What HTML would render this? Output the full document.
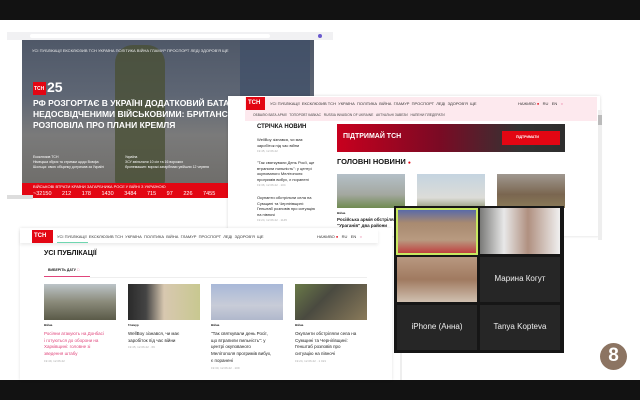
<!DOCTYPE html>
<html><head><meta charset="utf-8"><style>
*{margin:0;padding:0;box-sizing:border-box}
body{width:640px;height:400px;background:#fff;position:relative;overflow:hidden;font-family:"Liberation Sans","DejaVu Sans",sans-serif}
.a{position:absolute}
.t{position:absolute;white-space:nowrap;color:#222}
</style></head><body>
<div class="a" style="left:0;top:0;width:640px;height:20px;background:#121212"></div>
<div class="a" style="left:0;top:380px;width:640px;height:20px;background:#121212"></div>

<!-- window 1 -->
<div class="a" style="left:7px;top:32px;width:326px;height:8px;background:#f1f1f3"></div>
<div class="a" style="left:30px;top:34px;width:240px;height:4px;background:#fff;border-radius:2px"></div>
<div class="a" style="left:318px;top:34px;width:4px;height:4px;border-radius:50%;background:#6a5acd"></div>
<div class="a" style="left:22px;top:40px;width:292px;height:158px;background:linear-gradient(180deg,#4f5868 0%,#5e6674 35%,#7a7a7a 60%,#6c6a66 100%)"></div>
<div class="a" style="left:115px;top:45px;width:50px;height:140px;background:#4a5036;opacity:.8;border-radius:18px 18px 4px 4px"></div>
<div class="a" style="left:240px;top:40px;width:70px;height:60px;background:#3f4e68;opacity:.7"></div>
<div class="t" style="left:32px;top:48px;font-size:4px;color:#eee">УСІ ПУБЛІКАЦІЇ ЕКСКЛЮЗИВ ТСН УКРАЇНА ПОЛІТИКА ВІЙНА ГЛАМУР ПРОСПОРТ ЛЕДІ ЗДОРОВ'Я ЩЕ</div>
<div class="a" style="left:33px;top:82px;width:13px;height:13px;background:#e30613"></div>
<div class="t" style="left:34px;top:86px;font-size:5px;color:#fff;font-weight:bold">ТСН</div>
<div class="t" style="left:47px;top:79px;font-size:14px;color:#fff;font-weight:bold">25</div>
<div class="t" style="left:33px;top:98px;font-size:8.5px;color:#fff;font-weight:bold;line-height:11px">РФ РОЗГОРТАЄ В УКРАЇНІ ДОДАТКОВИЙ БАТАЛЬЙОН З<br>НЕДОСВІДЧЕНИМИ ВІЙСЬКОВИМИ: БРИТАНСЬКА РОЗВІДКА<br>РОЗПОВІЛА ПРО ПЛАНИ КРЕМЛЯ</div>
<div class="t" style="left:33px;top:155px;font-size:3.5px;color:#fff;line-height:5px">Ексклюзив ТСН<br>Німецька зброя та стримки щодо Вовфа<br>Шольца: свою обіцянку дотримав за Україні</div>
<div class="t" style="left:125px;top:155px;font-size:3.5px;color:#fff;line-height:5px">Україна<br>ЗСУ звільнили 10 сіл та 16 ворожих<br>бронемашин: ворожі загарбники увійшли 12 червня</div>
<div class="a" style="left:22px;top:183px;width:292px;height:15px;background:#e30613"></div>
<div class="t" style="left:33px;top:184px;font-size:4px;color:#fff">ВІЙСЬКОВІ ВТРАТИ КРАЇНИ ЗАГАРБНИКА РОСІЇ У ВІЙНІ З УКРАЇНОЮ</div>
<div class="t" style="left:33px;top:191px;font-size:5.5px;color:#fff;word-spacing:9px">~32150 212 178 1430 3484 715 97 226 7455</div>
<div class="a" style="left:7px;top:195px;width:26px;height:4px;background:#ddd"></div>

<!-- window 2 -->
<div class="a" style="left:228px;top:96px;width:372px;height:140px;background:#fff;box-shadow:0 0 3px rgba(0,0,0,.15)"></div>
<div class="a" style="left:246px;top:97px;width:100px;height:24px;background:#fff"></div>
<div class="a" style="left:245px;top:97px;width:352px;height:24px;background:#fde9ee"></div>
<div class="a" style="left:246px;top:97px;width:19px;height:13px;background:#e30613"></div>
<div class="t" style="left:248px;top:100px;font-size:6px;color:#fff;font-weight:bold">ТСН</div>
<div class="t" style="left:270px;top:101px;font-size:4px;color:#333">УСІ ПУБЛІКАЦІЇ &nbsp;ЕКСКЛЮЗИВ ТСН &nbsp;УКРАЇНА &nbsp;ПОЛІТИКА &nbsp;ВІЙНА &nbsp;ГЛАМУР &nbsp;ПРОСПОРТ &nbsp;ЛЕДІ &nbsp;ЗДОРОВ'Я &nbsp;ЩЕ</div>
<div class="t" style="left:518px;top:101px;font-size:4px;color:#333">НАЖИВО <span style="color:#e30613">●</span> &nbsp; RU &nbsp; EN &nbsp; <span style="color:#e0457b">○</span></div>
<div class="t" style="left:253px;top:113px;font-size:3.3px;color:#444">ОБВАЛЮ ВАТА АРМІЇ &nbsp; ТОПОРОВТ КАВКАС &nbsp; RUSSIA INVASION OF UKRAINE &nbsp; АКТУАЛЬНІ ЗАВЕЗИ &nbsp; НАПЕНИ ПЛЕДЕРАТИ</div>
<div class="t" style="left:257px;top:124px;font-size:6px;color:#111;font-weight:bold">СТРІЧКА НОВИН</div>
<div class="t" style="left:257px;top:137px;font-size:4px;line-height:5.5px">WellBoy зізнався, чи має<br>заробіток під час війни<br><span style="color:#aaa;font-size:3px">19:45, 12.06.22</span></div>
<div class="t" style="left:257px;top:160px;font-size:4px;line-height:5.5px">"Так святкували День Росії, ще<br>втрапили пильність": у центрі<br>окупованого Мелітополя<br>прогримів вибух, є поранені<br><span style="color:#aaa;font-size:3px">19:36, 12.06.22 · 104</span></div>
<div class="t" style="left:257px;top:195px;font-size:4px;line-height:5.5px">Окупанти обстріляли села на<br>Сумщині та Чернігівщині:<br>Генштаб розповів про ситуацію<br>на півночі<br><span style="color:#aaa;font-size:3px">19:24, 12.06.22 · 1145</span></div>
<div class="a" style="left:337px;top:124px;width:228px;height:28px;background:linear-gradient(90deg,#c8001e 0%,#7a0a24 45%,#333 80%,#2e2e2e 100%)"></div>
<div class="t" style="left:343px;top:133px;font-size:7px;color:#fff;font-weight:bold">ПІДТРИМАЙ ТСН</div>
<div class="a" style="left:502px;top:131px;width:58px;height:14px;background:#e30613"></div>
<div class="t" style="left:516px;top:135px;font-size:3.5px;color:#fff;font-weight:bold">ПІДТРИМАТИ</div>
<div class="t" style="left:337px;top:157px;font-size:7.5px;color:#111;font-weight:bold">ГОЛОВНІ НОВИНИ <span style="color:#e30613;font-size:5px">●</span></div>
<div class="a" style="left:337px;top:174px;width:68px;height:34px;background:linear-gradient(180deg,#b4c0c8 0%,#a4a8a0 60%,#6f8a50 100%)"></div>
<div class="a" style="left:417px;top:174px;width:68px;height:34px;background:linear-gradient(180deg,#c4d4e0 0%,#dcdcd8 70%,#98a080 100%)"></div>
<div class="a" style="left:497px;top:174px;width:68px;height:34px;background:linear-gradient(180deg,#a09890 0%,#7a6650 60%,#8a7a58 100%)"></div>
<div class="t" style="left:337px;top:211px;font-size:3px;font-weight:bold">Війна</div>
<div class="t" style="left:337px;top:217px;font-size:4.5px;font-weight:bold;line-height:6px">Російська армія обстріляла<br>"Ураганів" два райони</div>
<div class="a" style="left:598px;top:110px;width:4px;height:130px;background:#eee"></div>
<div class="a" style="left:598px;top:115px;width:4px;height:10px;background:#bbb"></div>

<!-- window 3 -->
<div class="a" style="left:20px;top:228px;width:372px;height:152px;background:#fff;box-shadow:0 0 3px rgba(0,0,0,.12)"></div>
<div class="a" style="left:20px;top:229px;width:358px;height:14px;background:#fff;box-shadow:0 2px 3px rgba(0,0,0,.08)"></div>
<div class="a" style="left:32px;top:230px;width:21px;height:13px;background:#e30613"></div>
<div class="t" style="left:34px;top:233px;font-size:6px;color:#fff;font-weight:bold">ТСН</div>
<div class="t" style="left:57px;top:234px;font-size:4px;color:#333">УСІ ПУБЛІКАЦІЇ &nbsp;ЕКСКЛЮЗИВ ТСН &nbsp;УКРАЇНА &nbsp;ПОЛІТИКА &nbsp;ВІЙНА &nbsp;ГЛАМУР &nbsp;ПРОСПОРТ &nbsp;ЛЕДІ &nbsp;ЗДОРОВ'Я &nbsp;ЩЕ</div>
<div class="a" style="left:57px;top:242px;width:31px;height:1px;background:#6fd6b0"></div>
<div class="t" style="left:317px;top:234px;font-size:4px;color:#333">НАЖИВО <span style="color:#e30613">●</span> &nbsp; RU &nbsp; EN &nbsp; <span style="color:#e0457b">○</span></div>
<div class="t" style="left:44px;top:250px;font-size:7px;color:#111;font-weight:bold">УСІ ПУБЛІКАЦІЇ</div>
<div class="t" style="left:48px;top:268px;font-size:3.5px;font-weight:bold">ВИБЕРІТЬ ДАТУ <span style="color:#e0457b">□</span></div>
<div class="a" style="left:44px;top:276px;width:46px;height:1px;background:#e0457b"></div>
<div class="a" style="left:90px;top:277px;width:277px;height:1px;background:#eee"></div>
<div class="a" style="left:44px;top:284px;width:72px;height:36px;background:linear-gradient(180deg,#bcc4c8 0%,#8a8a7a 50%,#5a5a48 100%)"></div>
<div class="a" style="left:128px;top:284px;width:72px;height:36px;background:linear-gradient(90deg,#2a2a2a 0%,#444 25%,#d8c8b0 50%,#c8c890 100%)"></div>
<div class="a" style="left:211px;top:284px;width:72px;height:36px;background:linear-gradient(180deg,#a8b8d8 0%,#c8ccd8 60%,#b0b8cc 100%)"></div>
<div class="a" style="left:295px;top:284px;width:72px;height:36px;background:linear-gradient(135deg,#6a7a48 0%,#4a4a40 40%,#8a7a5a 100%)"></div>
<div class="t" style="left:44px;top:323px;font-size:3px;font-weight:bold">Війна</div>
<div class="t" style="left:128px;top:323px;font-size:3px;font-weight:bold">Гламур</div>
<div class="t" style="left:211px;top:323px;font-size:3px;font-weight:bold">Війна</div>
<div class="t" style="left:295px;top:323px;font-size:3px;font-weight:bold">Війна</div>
<div class="t" style="left:44px;top:331px;font-size:4.5px;color:#e0457b;line-height:6.7px">Росіяни атакують на Донбасі<br>і готуються до оборони на<br>Харківщині: головне зі<br>зведення штабу<br><span style="color:#aaa;font-size:3px">19:49, 12.06.22</span></div>
<div class="t" style="left:128px;top:331px;font-size:4.5px;line-height:6.7px">WellBoy зізнався, чи має<br>заробіток під час війни<br><span style="color:#aaa;font-size:3px">19:45, 12.06.22 · 69</span></div>
<div class="t" style="left:211px;top:331px;font-size:4.5px;line-height:6.7px">"Так святкували день Росії,<br>що втрапили пильність": у<br>центрі окупованого<br>Мелітополя прогримів вибух,<br>є поранені<br><span style="color:#aaa;font-size:3px">19:30, 12.06.22 · 109</span></div>
<div class="t" style="left:295px;top:331px;font-size:4.5px;line-height:6.7px">Окупанти обстріляли села на<br>Сумщині та Чернігівщині:<br>Генштаб розповів про<br>ситуацію на півночі<br><span style="color:#aaa;font-size:3px">19:24, 12.06.22 · 1 021</span></div>
<div class="a" style="left:400px;top:240px;width:2px;height:140px;background:#eee"></div>

<!-- zoom panel -->
<div class="a" style="left:394px;top:206px;width:170px;height:147px;background:#161616"></div>
<div class="a" style="left:396px;top:208px;width:82px;height:47px;background:linear-gradient(180deg,#5a6aa8 0%,#a88a70 30%,#b89a80 70%,#c04040 100%);border:2px solid #c8e860"></div>
<div class="a" style="left:480px;top:208px;width:80px;height:46px;background:linear-gradient(90deg,#7a7a78 0%,#e8e8e8 30%,#b09080 60%,#f0f0f0 100%)"></div>
<div class="a" style="left:397px;top:257px;width:80px;height:45px;background:linear-gradient(180deg,#b89880 0%,#a07a60 50%,#d0c0b0 100%)"></div>
<div class="a" style="left:480px;top:257px;width:80px;height:45px;background:#262626"></div>
<div class="a" style="left:397px;top:305px;width:80px;height:45px;background:#262626"></div>
<div class="a" style="left:480px;top:305px;width:80px;height:45px;background:#262626"></div>
<div class="t" style="left:480px;top:274px;width:80px;text-align:center;font-size:8px;color:#eee">Марина Когут</div>
<div class="t" style="left:397px;top:322px;width:80px;text-align:center;font-size:8px;color:#eee">iPhone (Анна)</div>
<div class="t" style="left:480px;top:322px;width:80px;text-align:center;font-size:8px;color:#eee">Tanya Kopteva</div>
<div class="a" style="left:600px;top:343px;width:27px;height:27px;border-radius:50%;background:#8c7462"></div>
<div class="t" style="left:600px;top:345px;width:27px;text-align:center;font-size:19px;color:#fff;font-weight:bold">8</div>
</body></html>
